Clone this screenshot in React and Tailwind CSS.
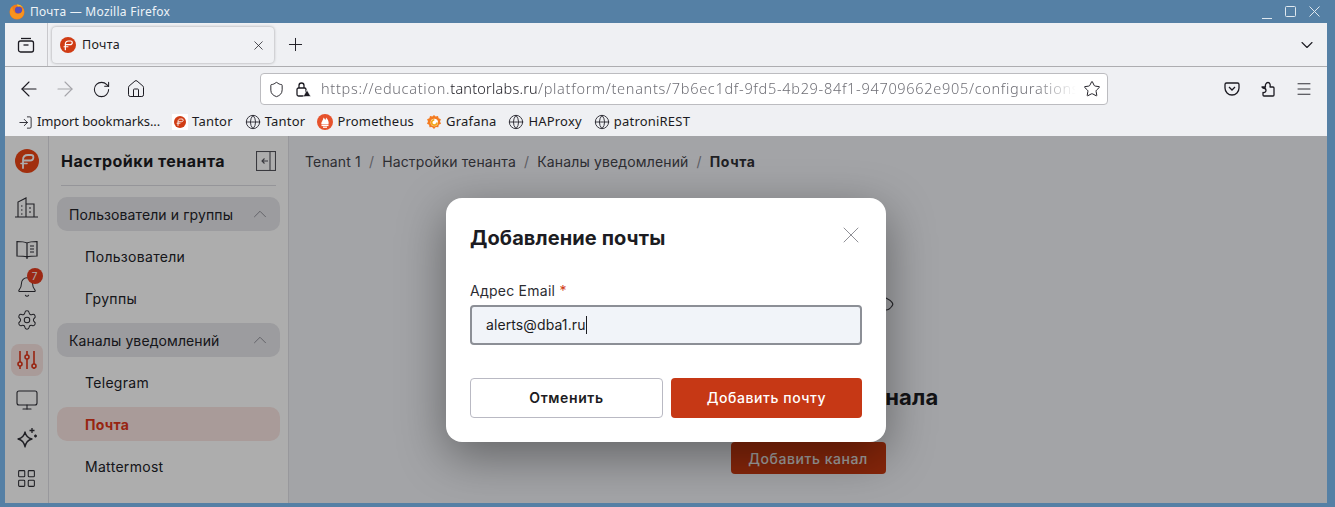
import React from 'react';
import {
  ArrowLeft, ArrowRight, RotateCw, Home, Shield, Star, Menu, ChevronDown, ChevronUp,
  Plus, X, Globe, Bell, Settings, Monitor, LayoutGrid, LogIn,
} from 'lucide-react';

// Tantor round logo
const TantorLogo = ({ size = 16, bg = '#d03c14' }) => (
  <svg width={size} height={size} viewBox="0 0 24 24">
    <circle cx="12" cy="12" r="12" fill={bg} />
    <path d="M8 19V11c0-3 2-5 5-5h3c1.600 0 2.400 1 2.400 2.200 0 1.900-1.600 3.300-3.600 3.300H9" fill="none" stroke="#fff" strokeWidth="1.800" strokeLinecap="round" />
    <path d="M6 14.500h6" stroke="#fff" strokeWidth="1.600" strokeLinecap="round" />
  </svg>
);

const FirefoxLogo = () => (
  <svg width="16" height="16" viewBox="0 0 16 16">
    <circle cx="8" cy="8" r="7.500" fill="#f27a1a" />
    <circle cx="9.500" cy="6" r="3.600" fill="#5a4fb8" />
    <path d="M1 8c0 4 3 7 7 7s7-3 7-7c0-1.500-.5-3-1.300-4 .2 3-1.700 6-5 6-2 0-3.300-1-3.700-2.500C4 6.500 3 3.500 3.500 2.500 2 3.700 1 5.800 1 8z" fill="#f7931e" />
    <path d="M8 .5c2.500 0 4.700 1.200 6 3-1.500-1-3.500-1.500-5-.8C8.500 1.800 8 1 8 .5z" fill="#fcc21b" />
  </svg>
);

const PrometheusLogo = () => (
  <svg width="16" height="16" viewBox="0 0 16 16">
    <circle cx="8" cy="8" r="8" fill="#e6522c" />
    <path d="M4.500 10.500C3.800 8 6 7 6.500 3.500 7.500 4.500 8 5 8 6c.8-.6 1-1.500 1-2.500 2 2 3.200 4.500 2.500 7z" fill="#fff" />
    <rect x="4.500" y="11" width="7" height="1.100" fill="#fff" />
    <rect x="6" y="12.600" width="4" height="1.200" fill="#fff" />
  </svg>
);

const GrafanaLogo = () => (
  <svg width="16" height="16" viewBox="0 0 16 16">
    <path d="M8 1l1.600 1.600L12 2l.6 2.300 2.300 1-.9 2.200L15 9.800l-2.200 1-.5 2.500-2.500-.2L8 15l-2-1.900-2.500.2-.4-2.500L1 9.800l1-2.300-.9-2.200 2.300-1L4 2l2.400.6z" fill="#f47b20" />
    <circle cx="8.300" cy="8.500" r="3.700" fill="#fff" />
    <path d="M11 8.500a2.700 2.700 0 1 1-2.700-2.700" fill="none" stroke="#f2a81d" strokeWidth="1.800" />
  </svg>
);

const Bookmark = ({ icon, label, className = '' }) => (
  <div className="flex items-center gap-[4px] shrink-0">
    {icon}
    <span className={className}>{label}</span>
  </div>
);

const Globe16 = () => <Globe size={16} strokeWidth={1.400} className="text-[#2b2a33]" />;

const SideLink = ({ label, active }) => (
  <div className={`h-[34px] rounded-[10px] flex items-center pl-[28px] text-[14px] tracking-[0.3px] ${active ? 'bg-[#fae5e2] text-[#e0361a] font-bold' : 'text-[#222228]'}`}>
    {label}
  </div>
);

const SideGroup = ({ label }) => (
  <div className="h-[34px] rounded-[10px] bg-[#e6e6ea] flex items-center justify-between pl-[12px] pr-[9px] text-[14px] tracking-[0.1px] text-[#222228]">
    <span>{label}</span>
    <ChevronUp size={22} strokeWidth={0.900} className="text-[#80808a]" />
  </div>
);

const Sep = () => <span className="text-[#8a8a92] mx-[8px]">/</span>;

const App = () => {
  return (
    <div className="w-[1335px] h-[507px] bg-[#5580a5] flex flex-col overflow-hidden font-['Noto_Sans',sans-serif]">
      {/* title bar */}
      <div className="h-[23px] flex items-center pl-[9px] pr-[15px] text-white text-[12px] shrink-0">
        <FirefoxLogo />
        <span className="ml-[5px] tracking-[0.25px] text-[#eef3f7]">Почта — Mozilla Firefox</span>
        <div className="ml-auto flex items-center gap-[13px] text-[#dfe8ef]">
          <svg width="10" height="11" viewBox="0 0 10 11" stroke="currentColor" className="translate-y-[4px]"><path d="M0 8.500h10" /></svg>
          <svg width="11" height="11" viewBox="0 0 11 11" fill="none" stroke="currentColor"><rect x="0.500" y="0.500" width="10" height="10" rx="1" /></svg>
          <svg width="11" height="11" viewBox="0 0 11 11" stroke="currentColor"><path d="M.5.5l10 10M10.500.5l-10 10" /></svg>
        </div>
      </div>

      {/* browser window */}
      <div className="ml-[5px] mr-[8px] h-[480px] flex flex-col shrink-0 bg-[#eff0f3]">
        {/* tabs */}
        <div className="h-[44px] border-b border-[#adadb0] flex items-stretch shrink-0">
          <div className="w-[43px] border-r border-[#c8c8cc] flex items-center justify-center">
            <svg width="18" height="18" viewBox="0 0 18 18" fill="none" stroke="#1c1b22" strokeWidth="1.300">
              <path d="M4 2.500h10" />
              <rect x="1.500" y="5" width="15" height="11" rx="2" />
              <path d="M6.500 9h5" />
            </svg>
          </div>
          <div className="ml-[4px] mt-[4px] w-[222px] h-[36px] rounded-[4px] bg-[#f0f1f4] shadow-[0_0_3px_rgba(0,0,0,0.35)] flex items-center pl-[8px] pr-[8px] text-[12.500px] text-[#1c1b22]">
            <TantorLogo size={16} />
            <span className="ml-[6px] tracking-[0.3px]">Почта</span>
            <X size={15} strokeWidth={1.200} className="ml-auto" />
          </div>
          <div className="ml-[11px] flex items-center">
            <Plus size={21} strokeWidth={1.100} className="text-[#1c1b22]" />
          </div>
          <div className="ml-auto mr-[10px] flex items-center">
            <ChevronDown size={20} strokeWidth={1.300} className="text-[#1c1b22]" />
          </div>
        </div>

        {/* toolbar */}
        <div className="h-[40px] flex items-center pt-[4px] pl-[12px] pr-[14px] shrink-0">
          <ArrowLeft size={24} strokeWidth={1.100} className="text-[#1c1b22]" />
          <ArrowRight size={24} strokeWidth={1.100} className="ml-[12px] text-[#a5a5aa]" />
          <RotateCw size={19} strokeWidth={1.300} className="ml-[15px] text-[#1c1b22]" />
          <Home size={20} strokeWidth={1.200} className="ml-[15px] text-[#1c1b22]" />
          <div className="ml-[114px] w-[848px] h-[32px] rounded-[4px] bg-white border border-[#bcbcc0] flex items-center pl-[7px] pr-[6px] text-[14.500px] overflow-hidden">
            <Shield size={17} strokeWidth={1.300} className="text-[#1c1b22] shrink-0" />
            <span className="ml-[10px] shrink-0 w-[16px] h-[16px] flex items-center justify-center">
              <svg width="16" height="16" viewBox="0 0 16 16" fill="none" stroke="#1c1b22" strokeWidth="1.300">
                <rect x="2" y="7" width="9" height="8" rx="1.500" />
                <path d="M4 7V4.500a2.500 2.500 0 0 1 5 0V7" />
                <path d="M12 9l3.800 6.500H8.200z" fill="#1c1b22" stroke="#fff" strokeWidth="0.600" />
              </svg>
            </span>
            <span className="ml-[10px] whitespace-nowrap overflow-hidden w-[755px] shrink-0 font-light tracking-[0.7px] text-[#6f6f76] [mask-image:linear-gradient(to_left,transparent,black_40px)]">
              https://education.<span className="text-[#1c1b22] tracking-[0.2px]">tantorlabs.ru</span>/platform/tenants/7b6ec1df-9fd5-4b29-84f1-94709662e905/configurations
            </span>
            <Star size={18} strokeWidth={1.300} className="ml-auto text-[#1c1b22] shrink-0" />
          </div>
          <svg width="16" height="16" viewBox="0 0 16 16" fill="none" stroke="#1c1b22" strokeWidth="1.300" className="ml-auto">
            <path d="M2.500 2h11A1.500 1.500 0 0 1 15 3.500V7a7 7 0 0 1-14 0V3.500A1.500 1.500 0 0 1 2.500 2z" />
            <path d="M5 6l3 3 3-3" />
          </svg>
          <svg width="16" height="16" viewBox="0 0 16 16" fill="none" stroke="#1c1b22" strokeWidth="1.300" strokeLinejoin="round" className="ml-[20px]">
            <path d="M2 6h3.500c-.5-2 .5-4.500 2.500-4.500S10.500 4 10 6h3a1 1 0 0 1 1 1v7a1 1 0 0 1-1 1H4a1 1 0 0 1-1-1v-2.500c2 .5 3-1 3-2s-1-2.500-3-2.500z" />
          </svg>
          <Menu size={18} strokeWidth={1.200} className="ml-[19px] text-[#1c1b22]" />
        </div>

        {/* bookmarks */}
        <div className="h-[29px] flex items-center gap-[12px] pl-[13px] pt-[1px] text-[13px] tracking-[0.2px] text-[#1c1b22] shrink-0">
          <Bookmark icon={<LogIn size={15} strokeWidth={1.400} />} label="Import bookmarks..." className="tracking-[-0.1px]" />
          <Bookmark icon={<span className="w-[16px] h-[16px] bg-white flex items-center justify-center"><TantorLogo size={12} /></span>} label="Tantor" />
          <Bookmark icon={<Globe16 />} label="Tantor" />
          <Bookmark icon={<PrometheusLogo />} label="Prometheus" />
          <Bookmark icon={<GrafanaLogo />} label="Grafana" />
          <Bookmark icon={<Globe16 />} label="HAProxy" />
          <Bookmark icon={<Globe16 />} label="patroniREST" />
        </div>

        {/* page */}
        <div className="relative flex-1 flex bg-white font-['Inter',sans-serif] overflow-hidden">
          <div className="w-[44px] border-r border-[#e0e0e6] flex flex-col items-center shrink-0 text-[#2f2f36]">
            <div className="mt-[13px] h-[24px]"><TantorLogo size={24} bg="#ee4616" /></div>
            <svg width="24" height="24" viewBox="0 0 24 24" fill="none" stroke="currentColor" strokeWidth="1.100" className="mt-[23px] shrink-0">
              <path d="M0 21h23M3 21V6l8-4v19M11 8h8v13" />
              <path d="M6 10h1.500M6 14h1.500M6 18h1.500M14 12h2M14 16h2" />
            </svg>
            <svg width="24" height="24" viewBox="0 0 24 24" fill="none" stroke="currentColor" strokeWidth="1.200" className="mt-[17px] shrink-0">
              <path d="M12 20V6C9 4.500 5 4.500 2 4.500V19c3 0 7 0 10 1 3-1 7-1 10-1V4.500c-3 0-7 0-10 1.500" />
              <path d="M15 9h4M15 12h4M15 15h4M12 20v2" />
            </svg>
            <div className="relative mt-[15px] h-[22px]">
              <Bell size={22} strokeWidth={1.100} />
              <span className="absolute -top-[8px] -right-[5px] w-[16px] h-[16px] rounded-full bg-[#e63c1e] text-white text-[10px] flex items-center justify-center">7</span>
            </div>
            <Settings size={22} strokeWidth={1.100} className="mt-[11px] shrink-0" />
            <div className="mt-[13px] w-[32px] h-[32px] rounded-[8px] bg-[#fae5e2] flex items-center justify-center text-[#e0361a] shrink-0">
              <svg width="20" height="20" viewBox="0 0 20 20" fill="none" stroke="currentColor" strokeWidth="1.600">
                <path d="M3 1v11M3 16v3M10 1v4M10 9v10M17 1v13M17 18v1" />
                <circle cx="3" cy="14" r="2" />
                <circle cx="10" cy="7" r="2" />
                <circle cx="17" cy="16" r="2" />
              </svg>
            </div>
            <Monitor size={24} strokeWidth={1.100} className="mt-[12px] shrink-0" />
            <svg width="24" height="24" viewBox="0 0 24 24" fill="none" stroke="currentColor" strokeWidth="1.300" strokeLinejoin="round" className="mt-[14px] shrink-0">
              <path d="M10 6c.8 4 2.500 6 7 7-4.500 1-6.200 3-7 8-.8-5-2.500-7-7-8 4.500-1 6.200-3 7-7z" />
              <path d="M17 2v5M14.500 4.500h5M20.500 8.500v3M19 10h3" />
            </svg>
            <LayoutGrid size={21} strokeWidth={1.200} className="mt-[18px] shrink-0" />
          </div>

          <div className="w-[240px] border-r border-[#e0e0e6] px-[8px] shrink-0">
            <div className="h-[50px] mx-[4px] border-b border-[#dcdce2] flex items-center justify-between">
              <span className="text-[16px] font-bold tracking-[0.5px] text-[#1c1c22]">Настройки тенанта</span>
              <svg width="20" height="20" viewBox="0 0 20 20" fill="none" stroke="#55555c" strokeWidth="1.100">
                <rect x="0.500" y="0.500" width="19" height="19" />
                <path d="M14 0.500v19M12 10H6M8.500 7.500L6 10l2.500 2.500" />
              </svg>
            </div>
            <div className="mt-[11px] flex flex-col gap-[8px]">
              <SideGroup label="Пользователи и группы" />
              <SideLink label="Пользователи" />
              <SideLink label="Группы" />
              <SideGroup label="Каналы уведомлений" />
              <SideLink label="Telegram" />
              <SideLink label="Почта" active />
              <SideLink label="Mattermost" />
            </div>
          </div>

          <div className="flex-1 bg-[#f1f2f7] flex flex-col">
            <div className="h-[50px] pl-[16px] flex items-center text-[14px] tracking-[0.15px] text-[#45454c]">
              Tenant 1<Sep />Настройки тенанта<Sep />Каналы уведомлений<Sep /><b className="text-[#303036] tracking-[0.6px]">Почта</b>
            </div>
            <div className="flex flex-col items-center">
              <svg width="172" height="40" viewBox="0 0 172 40" fill="none" stroke="#3a3a40" strokeWidth="1.200" className="mt-[100px]">
                <path d="M164 12C170 15 172 18 170 20C168 23 166 24 164 24" />
              </svg>
              <div className="mt-[59px] text-[22px] font-bold tracking-[0.1px] text-[#1c1c22] leading-[24px]">Нет созданного канала</div>
              <div className="mt-[33px] h-[32px] w-[155px] rounded-[4px] bg-[#c8380f] text-[#eee] text-[14px] font-medium tracking-[0.55px] flex items-center justify-center">Добавить канал</div>
            </div>
          </div>

          {/* modal */}
          <div className="absolute inset-0 bg-[rgba(0,0,0,0.32)] flex items-center justify-center">
            <div className="w-[440px] h-[244px] bg-white rounded-[16px] shadow-[0_14px_48px_rgba(0,0,0,0.4)] px-[24px] pt-[24px] flex flex-col">
              <div className="flex items-start justify-between h-[32px]">
                <span className="text-[20px] leading-[32px] font-bold tracking-[0.1px] text-[#1c1c22]">Добавление почты</span>
                <X size={28} strokeWidth={0.700} className="text-[#77777e] -mr-[3px] -mt-[1px]" />
              </div>
              <div className="mt-[27px] text-[14px] leading-[20px] tracking-[0.25px] text-[#2c2c32]">
                Адрес Email <span className="text-[#d03c14]">*</span>
              </div>
              <div className="mt-[4px] h-[40px] rounded-[4px] bg-[#f1f4f9] border-2 border-[#8c8f96] flex items-center pl-[14px] text-[14px] tracking-[0.1px] text-[#1c1c22]">
                alerts@dba1.ru<span className="w-px h-[18px] bg-[#1c1c22]" />
              </div>
              <div className="mt-[33px] flex gap-[8px]">
                <div className="w-[193px] h-[40px] rounded-[4px] border border-[#b9b9c3] flex items-center justify-center text-[14px] font-semibold tracking-[0.6px] text-[#1c1c22]">Отменить</div>
                <div className="w-[191px] h-[40px] rounded-[4px] bg-[#c63815] flex items-center justify-center text-[14px] font-medium tracking-[0.55px] text-white">Добавить почту</div>
              </div>
            </div>
          </div>
        </div>
      </div>
    </div>
  );
};

export default App;
